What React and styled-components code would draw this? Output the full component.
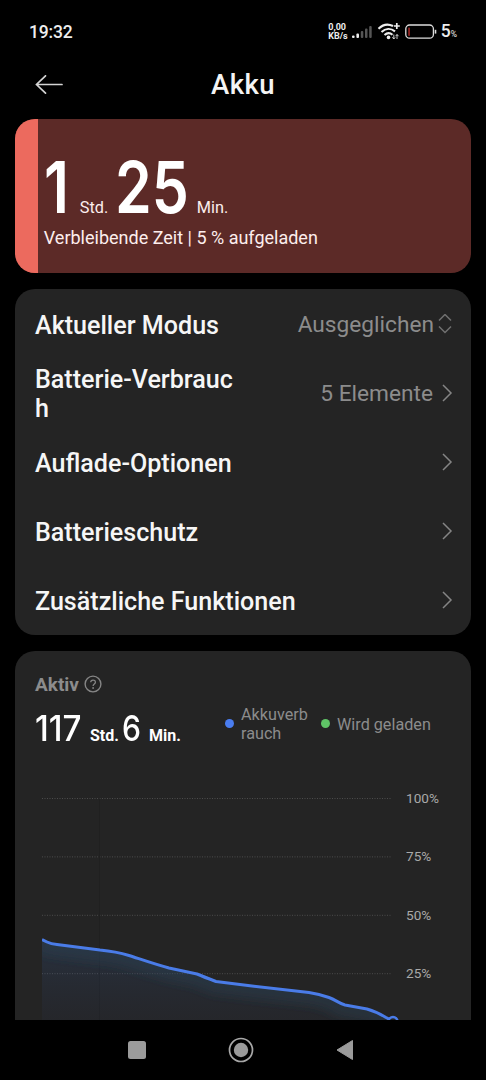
import styled, { createGlobalStyle } from "styled-components";

const GlobalStyle = createGlobalStyle`
  * {
    box-sizing: border-box;
  }

  body {
    margin: 0;
    background-color: #000;
    font-family: Roboto, "Liberation Sans", sans-serif;
  }
`;

const Screen = styled.div`
  display: flex;
  flex-direction: column;
  width: 486px;
  height: 1080px;
  overflow: hidden;
  color: #fff;
  background-color: #000;
`;

const StatusBar = styled.div`
  display: flex;
  justify-content: space-between;
  align-items: center;
  height: 64px;
  padding: 0 29px 0 29px;
`;
const Clock = styled.span`
  font-size: 17.5px;
  font-weight: 500;
  line-height: 20px;
  letter-spacing: -0.2px;
  color: #ededed;
`;
const StatusIcons = styled.div`
  display: flex;
  align-items: center;
`;
const NetSpeed = styled.span`
  width: 24px;
  font-size: 9px;
  font-weight: 700;
  line-height: 9px;
  color: #ededed;
`;
const StatusDrawing = styled.svg`
  display: block;
  width: 88.5px;
  height: 20px;
`;
const BatteryText = styled.span`
  font-size: 17.5px;
  font-weight: 500;
  line-height: 20px;
  color: #ededed;

  small {
    font-size: 8.5px;
    font-weight: 400;
  }
`;

const Header = styled.header`
  display: grid;
  grid-template-columns: 63px 1fr 63px;
  align-items: center;
  height: 42px;
  margin-bottom: 13px;
`;
const BackButton = styled.button`
  display: flex;
  justify-content: flex-end;
  padding: 0;
  border: none;
  background: none;
`;
const Title = styled.h1`
  margin: 0;
  text-align: center;
  font-size: 27.5px;
  font-weight: 500;
  line-height: 34px;
  letter-spacing: 0.5px;
  color: #f4f4f4;
`;

const Content = styled.main`
  display: flex;
  flex-direction: column;
  flex: 1;
  gap: 16px;
  min-height: 0;
  padding: 0 15px;
  overflow: hidden;
`;

const BatteryCard = styled.section`
  display: flex;
  flex-shrink: 0;
  height: 154px;
  border-radius: 20px;
  overflow: hidden;
  background-color: #5c2a27;
`;
const Level = styled.div`
  width: ${(props) => props.percent}%;
  background-color: #ec6a5e;
`;
const Remaining = styled.div`
  padding: 36px 0 0 6px;
`;
const BigTime = styled.div`
  display: flex;
  align-items: baseline;
  height: 70px;
`;
const BigNumber = styled.span`
  width: ${(props) => props.width}px;
  font-family: Inter, Roboto, sans-serif;
  font-size: 71px;
  font-weight: 600;
  line-height: 64px;
  white-space: nowrap;
  transform: scaleX(0.83);
  transform-origin: left;
`;
const BigUnit = styled.span`
  width: ${(props) => props.width}px;
  font-size: 16.3px;
  white-space: nowrap;
  color: #fdeeed;
`;
const Caption = styled.p`
  margin: 0;
  font-size: 18px;
  line-height: 26px;
  white-space: nowrap;
  color: #fdeeed;
`;

const Card = styled.section`
  flex-shrink: 0;
  padding: 0 18px 0 20px;
  border-radius: 20px;
  background-color: #242424;
`;
const Row = styled.div`
  display: flex;
  justify-content: space-between;
  align-items: center;
  height: 69.2px;
`;
const RowLabel = styled.span`
  max-width: ${(props) => (props.narrow ? "202px" : "none")};
  padding-top: 3px;
  font-size: 25.1px;
  font-weight: 500;
  line-height: 29px;
  word-break: break-all;
  color: #f6f6f6;
`;
const RowValue = styled.span`
  display: flex;
  align-items: center;
  gap: ${(props) => props.gap || 8}px;
  font-size: 22.7px;
  line-height: 29px;
  white-space: nowrap;
  color: #8c8c8c;
`;
const ValueText = styled.span`
  padding-top: 1px;
`;

const ActiveCard = styled(Card)`
  height: 440px;
  padding: 0 20px;
`;
const ActiveHead = styled.div`
  display: flex;
  align-items: center;
  gap: 5px;
  padding-top: 21px;
  font-size: 19px;
  font-weight: 700;
  line-height: 26px;
  color: #8c8c8c;

  svg {
    margin-top: -2px;
  }
`;
const Summary = styled.div`
  display: flex;
  align-items: center;
  height: 53px;
`;
const ActiveTime = styled.div`
  display: flex;
  align-items: baseline;
  width: 190px;
  padding-top: 7px;
  white-space: nowrap;
`;
const ActiveNumber = styled.span`
  width: ${(props) => props.width}px;
  font-family: Inter, Roboto, sans-serif;
  font-size: 35px;
  font-weight: 500;
  line-height: 44px;
  transform: scaleX(${(props) => props.stretch || 0.86});
  transform-origin: left;
`;
const ActiveUnit = styled.span`
  width: ${(props) => props.width}px;
  font-size: 16px;
  font-weight: 700;
`;
const LegendItem = styled.div`
  display: flex;
  align-items: center;
  gap: 7px;
  width: ${(props) => props.width}px;
  padding-right: ${(props) => props.inset || 0}px;
  font-size: 16.2px;
  line-height: 19px;
  word-break: break-all;
  color: #8c8c8c;

  &::before {
    flex-shrink: 0;
    width: 9px;
    height: 9px;
    margin-top: -2px;
    border-radius: 50%;
    background-color: ${(props) => props.color};
    content: "";
  }
`;
const Chart = styled.div`
  display: flex;
  padding: 39px 0 0 7px;
`;
const Plot = styled.svg`
  display: block;
  width: 364px;
  height: 252px;
`;
const Scale = styled.div`
  display: flex;
  flex-direction: column;
  margin-top: -16px;
`;
const ScaleLabel = styled.span`
  height: 58.4px;
  font-size: 13.6px;
  line-height: 48px;
  color: #a9a9a9;
`;

const NavBar = styled.nav`
  display: flex;
  justify-content: center;
  align-items: center;
  gap: 82px;
  height: 60px;
  padding-right: 5px;
`;
const NavButton = styled.button`
  display: flex;
  padding: 0;
  border: none;
  background: none;
`;

const menu = [
  { label: "Aktueller Modus", value: "Ausgeglichen", select: true },
  { label: "Batterie-Verbrauch", value: "5 Elemente", narrow: true },
  { label: "Auflade-Optionen" },
  { label: "Batterieschutz" },
  { label: "Zusätzliche Funktionen" },
];

const scale = ["100%", "75%", "50%", "25%"];

const line =
  "M0 149.5L5 152Q9 154 15 154.5L58 160Q74 161.500 87 165.500C98 169 112 174 127 178L155 184Q162 187 174 191.500L210 196L267 202.500Q277 204 287 207.500C294 210 296 213 303 215L325 219Q334 221.500 344 227.500L351 231";

function Chevron() {
  return (
    <svg width="12" height="18" viewBox="0 0 12 18" fill="none">
      <path d="M2 1L10 9L2 17" stroke="#858585" strokeWidth="1.5" />
    </svg>
  );
}

function UpDown() {
  return (
    <svg width="15" height="20" viewBox="0 0 15 20" fill="none">
      <path
        d="M1 6.500L7 0.500L13 6.500M1 12.500L7 18.500L13 12.500"
        stroke="#707070"
        strokeWidth="1.5"
      />
    </svg>
  );
}

function StatusSymbols() {
  return (
    <StatusDrawing viewBox="0 0 88.5 20" fill="none">
      {/* signal strength */}
      <rect x="0" y="13.500" width="2.600" height="2.500" rx="1" fill="#eee" />
      <rect x="4.400" y="11.500" width="2.600" height="4.500" rx="1" fill="#eee" />
      <rect x="8.800" y="9" width="2.500" height="7" rx="1" fill="#555" />
      <rect x="13" y="6.500" width="2.500" height="9.500" rx="1" fill="#555" />
      <rect x="17.200" y="4" width="2.500" height="12" rx="1" fill="#555" />

      {/* wifi */}
      <g stroke="#eee" strokeWidth="2.100">
        <path d="M26.500 6.700C31 2.300 36.500 1.800 41 4" />
        <path d="M29.500 10C33.500 6.200 38.800 6 43 9.300" />
        <path d="M32.500 13C35 10.800 38 10.700 40.500 12.800" />
        <path d="M44.800 1V7M41.800 4H47.800" strokeWidth="1.700" />
      </g>
      <circle cx="36.500" cy="15.400" r="1.800" fill="#eee" />
      <path
        d="M41.800 12.500V17M40.300 15.300L41.800 17L43.200 15.300M45 17V12.500M43.500 14.200L45 12.500L46.500 14.200"
        stroke="#ddd"
        strokeWidth="0.900"
      />

      {/* battery */}
      <rect x="53.800" y="3" width="27.600" height="13.200" rx="3.800" stroke="#ddd" strokeWidth="1.300" />
      <rect x="56.200" y="5.400" width="1.700" height="8.500" rx="0.700" fill="#9c2522" />
      <path d="M83.500 7.800V11.600" stroke="#ddd" strokeWidth="1.600" />
    </StatusDrawing>
  );
}

function BatteryChart() {
  return (
    <Chart>
      <Plot viewBox="0 0 364 252" fill="none">
        <defs>
          <linearGradient id="area" x1="0" y1="149" x2="0" y2="241" gradientUnits="userSpaceOnUse">
            <stop offset="0" stopColor="#3a6fc0" stopOpacity="0.180" />
            <stop offset="1" stopColor="#303860" stopOpacity="0.080" />
          </linearGradient>
          <clipPath id="under">
            <path d={`${line}V252H0Z`} />
          </clipPath>
          <filter id="soft" x="-10%" y="-30%" width="120%" height="160%">
            <feGaussianBlur stdDeviation="4" />
          </filter>
        </defs>
        {scale.map((label, i) => (
          <path
            key={label}
            d={`M0 ${8.5 + i * 58.4}H350`}
            stroke="#4c4c4c"
            strokeDasharray="1 1.500"
          />
        ))}
        <path d="M57.500 8.500V252" stroke="#202020" />
        <path d={`${line}V252H0Z`} fill="url(#area)" />
        <g clipPath="url(#under)">
          <path d={line} stroke="#2c4654" strokeOpacity="0.350" strokeWidth="26" filter="url(#soft)" />
        </g>
        <path d={line} stroke="#4a7ce8" strokeWidth="3" strokeLinejoin="round" />
        <circle cx="351" cy="231.500" r="4.500" fill="#242424" stroke="#4a7ce8" strokeWidth="2.500" />
      </Plot>
      <Scale>
        {scale.map((label) => (
          <ScaleLabel key={label}>{label}</ScaleLabel>
        ))}
      </Scale>
    </Chart>
  );
}

export default function App() {
  return (
    <Screen>
      <GlobalStyle />
      <StatusBar>
        <Clock>19:32</Clock>
        <StatusIcons>
          <NetSpeed>
            0,00
            <br />
            KB/s
          </NetSpeed>
          <StatusSymbols />
          <BatteryText>
            5<small>%</small>
          </BatteryText>
        </StatusIcons>
      </StatusBar>

      <Header>
        <BackButton aria-label="Zurück">
          <svg width="28" height="20" viewBox="0 0 28 20" fill="none">
            <path
              d="M27 9.500H1.500M10.500 0.800L1.500 9.500L10.500 18.200"
              stroke="#d4d4d4"
              strokeWidth="1.700"
              strokeLinecap="round"
            />
          </svg>
        </BackButton>
        <Title>Akku</Title>
      </Header>

      <Content>
        <BatteryCard>
          <Level percent={5} />
          <Remaining>
            <BigTime>
              <BigNumber width={36}>1</BigNumber>
              <BigUnit width={35}>Std.</BigUnit>
              <BigNumber width={82}>25</BigNumber>
              <BigUnit width={40}>Min.</BigUnit>
            </BigTime>
            <Caption>Verbleibende Zeit | 5 % aufgeladen</Caption>
          </Remaining>
        </BatteryCard>

        <Card>
          {menu.map((item) => (
            <Row key={item.label}>
              <RowLabel narrow={item.narrow}>{item.label}</RowLabel>
              <RowValue gap={item.select ? 4 : 8}>
                {item.value && <ValueText>{item.value}</ValueText>}
                {item.select ? <UpDown /> : <Chevron />}
              </RowValue>
            </Row>
          ))}
        </Card>

        <ActiveCard>
          <ActiveHead>
            Aktiv
            <svg width="18" height="18" viewBox="0 0 18 18" fill="none">
              <circle cx="9" cy="9" r="7.900" stroke="#858585" strokeWidth="1.400" />
              <path
                d="M6.700 7.300C6.700 4.300 11.400 4.300 11.400 7.200C11.400 9 9.100 8.900 9.100 11"
                stroke="#858585"
                strokeWidth="1.300"
              />
              <circle cx="9.100" cy="13" r="0.900" fill="#858585" />
            </svg>
          </ActiveHead>
          <Summary>
            <ActiveTime>
              <ActiveNumber width={55} stretch={0.95}>
                117
              </ActiveNumber>
              <ActiveUnit width={32}>Std.</ActiveUnit>
              <ActiveNumber width={27}>6</ActiveNumber>
              <ActiveUnit width={34}>Min.</ActiveUnit>
            </ActiveTime>
            <LegendItem width={96} inset={10} color="#4a7df0">
              Akkuverbrauch
            </LegendItem>
            <LegendItem width={120} color="#5fc466">
              Wird geladen
            </LegendItem>
          </Summary>
          <BatteryChart />
        </ActiveCard>
      </Content>

      <NavBar>
        <NavButton aria-label="Letzte Apps">
          <svg width="18" height="18" viewBox="0 0 18 18">
            <rect width="18" height="18" rx="2.500" fill="#9b9b9b" />
          </svg>
        </NavButton>
        <NavButton aria-label="Startseite">
          <svg width="26" height="26" viewBox="0 0 26 26" fill="none">
            <circle cx="13" cy="13" r="11.500" stroke="#a8a8a8" strokeWidth="1.700" />
            <circle cx="13" cy="13" r="7.200" fill="#9b9b9b" />
          </svg>
        </NavButton>
        <NavButton aria-label="Zurück">
          <svg width="18" height="22" viewBox="0 0 18 22">
            <path
              d="M1 11L16.500 1.500V20.500Z"
              fill="#9b9b9b"
              stroke="#9b9b9b"
              strokeLinejoin="round"
            />
          </svg>
        </NavButton>
      </NavBar>
    </Screen>
  );
}
